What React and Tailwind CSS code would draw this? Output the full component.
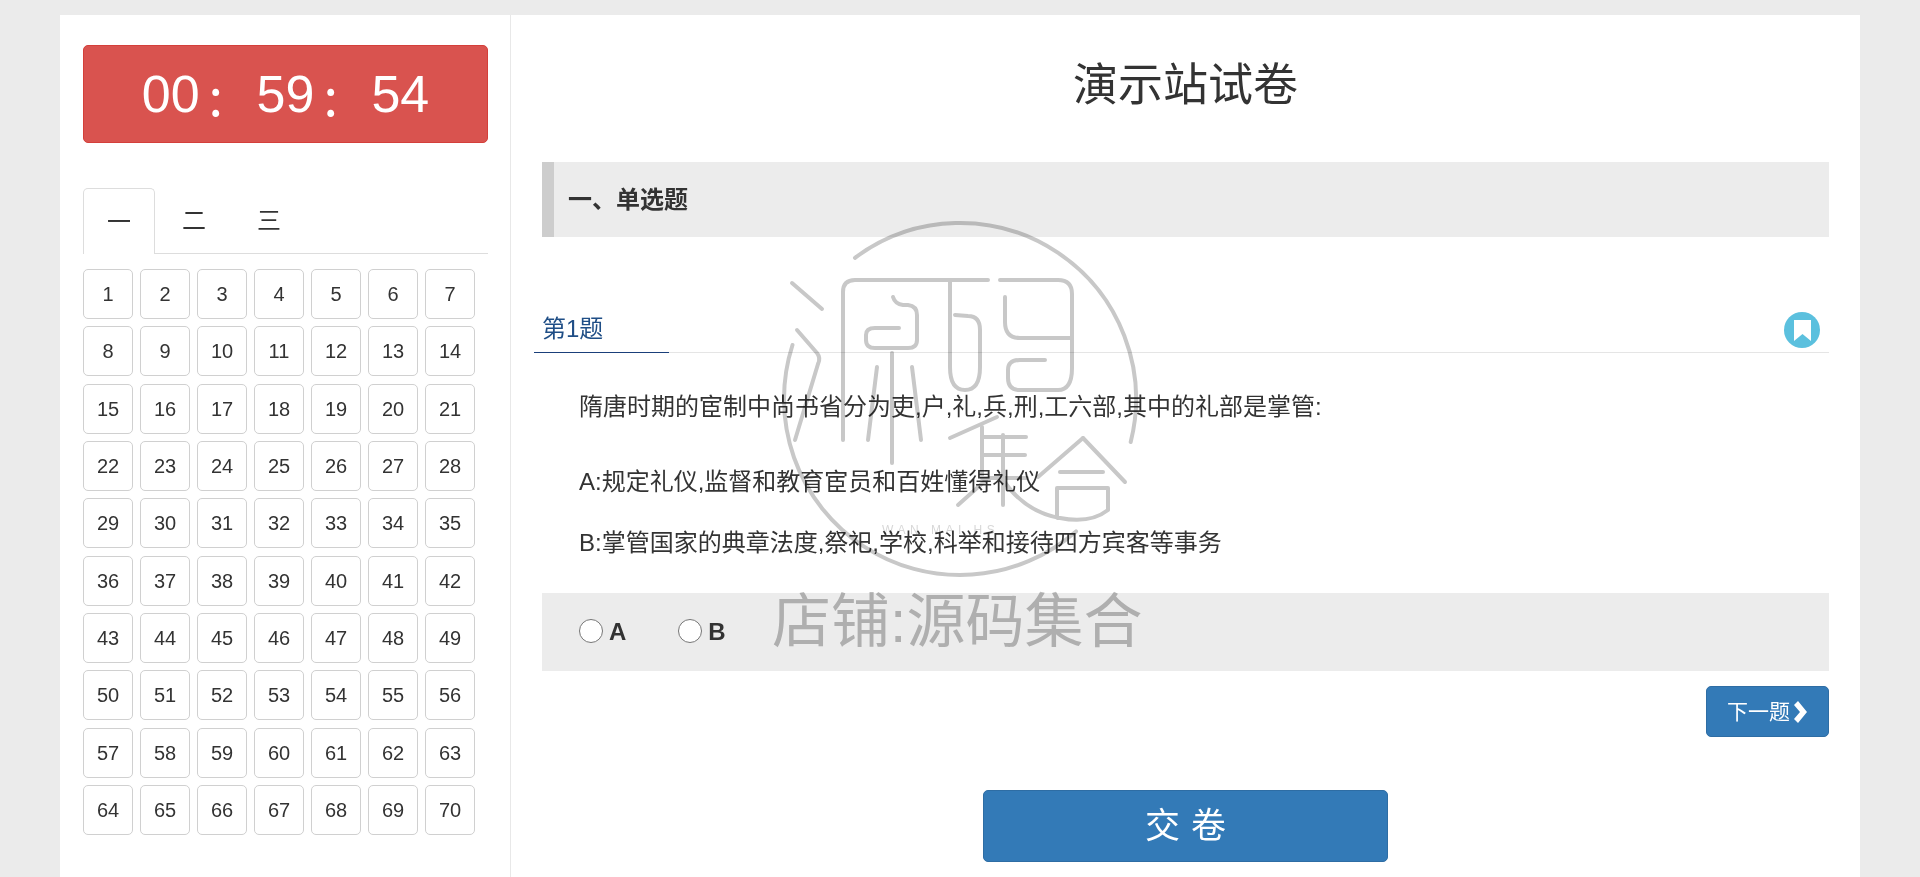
import React from 'react';

const numbers = Array.from({ length: 70 }, (_, i) => i + 1);

// 水印印章：圆环 + 线条字形，坐标直接用页面坐标
function Watermark() {
    return (
        <svg
            className="absolute left-[760px] top-[210px] w-[400px] h-[380px] mix-blend-multiply pointer-events-none"
            viewBox="760 210 400 380"
            fill="none"
            stroke="#c8c8c8"
            strokeWidth="4"
            strokeLinecap="round"
            strokeLinejoin="round"
        >
            <path d="M855 257.8A176 176 0 0 1 1130.7 442" />
            <path d="M1076 531.4A176 176 0 0 1 792.5 345" />
            <path d="M792 283L822 309" />
            <path d="M797 330L817 353Q821 358 818 364L795 440" />
            <path d="M843 440V292Q843 280 855 280H988" />
            <path d="M893 297Q895 304 903 305H908Q917 306 917 315V340Q917 348 908 348H875Q866 348 866 340V335Q866 328 875 328H899" />
            <path d="M877 367L868 440" />
            <path d="M912 367L921 440" />
            <path d="M892 353V463" />
            <path d="M950 282V367Q950 390 965 390Q980 390 980 367V330Q980 316 968 316L955 315" />
            <path d="M1000 280H1058Q1072 280 1072 294V368Q1072 390 1058 390H1020Q1008 390 1008 378V370Q1008 360 1020 360H1045" />
            <path d="M1005 297V322Q1005 338 1020 338H1070" />
            <path d="M997 417L950 438" />
            <path d="M982 427V478" />
            <path d="M982 437H1026" />
            <path d="M982 455H1025" />
            <path d="M982 478H1027" />
            <path d="M1003 435V505" />
            <path d="M986 480L958 505" />
            <path d="M1003 480Q1025 512 1060 518Q1090 524 1108 510V488H1057V518" />
            <path d="M1083 438L1038 477" />
            <path d="M1083 438L1125 482" />
            <path d="M1060 472H1103" />
            <text x="882" y="534" fontSize="12" fill="#d8d8d8" stroke="none" letterSpacing="4.5" fontFamily="'Liberation Sans', sans-serif">WAN MAI HS</text>
        </svg>
    );
}

function TimerColon() {
    return <span className="inline-block w-[57px] pl-[9px] font-['Noto_Sans_CJK_SC',sans-serif]">:</span>;
}

function App() {
    return (
        <div className="relative h-[877px] overflow-hidden bg-[#ebebeb] pt-[15px] font-['Liberation_Sans','Noto_Sans_CJK_SC',sans-serif] text-[#333]">
            <div className="ml-[60px] flex h-[862px] w-[1800px] bg-white">
                {/* 左侧：计时 + 题号 */}
                <div className="w-[451px] shrink-0 border-r border-[#e8e8e8] pl-[23px] pt-[30px]">
                    <div className="flex h-[98px] w-[405px] items-center justify-center rounded-[5px] border border-[#d43f3a] bg-[#d9534f] text-[52px] text-white">
                        <span>00</span><TimerColon /><span>59</span><TimerColon /><span>54</span>
                    </div>
                    <div className="mt-[45px] flex h-[66px] w-[405px] border-b border-[#ddd] text-[24px]">
                        <div className="flex h-[66px] w-[72px] items-center justify-center rounded-t-[5px] border border-b-0 border-[#ddd] bg-white">一</div>
                        <div className="ml-[3px] flex h-[65px] w-[72px] items-center justify-center">二</div>
                        <div className="ml-[3px] flex h-[65px] w-[72px] items-center justify-center">三</div>
                    </div>
                    <div className="mt-[15px] grid w-[392px] grid-cols-[repeat(7,50px)] gap-x-[7px] gap-y-[7.33px]">
                        {numbers.map((n) => (
                            <div key={n} className="flex h-[50px] items-center justify-center rounded-[5px] border border-[#d0d0d0] text-[20px]">
                                {n}
                            </div>
                        ))}
                    </div>
                </div>

                {/* 右侧：试卷 */}
                <div className="min-w-0 flex-1 px-[31px]">
                    <h1 className="mb-[5px] flex h-[142px] items-center justify-center text-[45px] font-normal">演示站试卷</h1>
                    <div className="flex h-[75px] items-center border-l-[12px] border-[#cdcdcd] bg-[#ececec] pl-[14px] text-[24px] font-bold">
                        一、单选题
                    </div>

                    <div className="-ml-[8px] mt-[72px] flex h-[44px] justify-between border-b border-[#e5e5e5]">
                        <div className="-mb-px h-[44px] w-[135px] border-b border-[#1a3f7a] pl-[8px] text-[24px] leading-[40px] text-[#1f4e86]">第1题</div>
                        <div className="mr-[9px] mt-[3px] flex h-[36px] w-[36px] items-center justify-center self-start rounded-full bg-[#5bc0de]">
                            <svg width="17" height="21" viewBox="0 0 17 21" fill="#fff">
                                <path d="M0 0H17V21L8.5 14L0 21Z" />
                            </svg>
                        </div>
                    </div>

                    <p className="ml-[37px] mt-[39px] text-[24px] leading-[30px]">隋唐时期的宦制中尚书省分为吏,户,礼,兵,刑,工六部,其中的礼部是掌管:</p>
                    <p className="ml-[37px] mt-[45px] text-[24px] leading-[30px]">A:规定礼仪,监督和教育宦员和百姓懂得礼仪</p>
                    <p className="ml-[37px] mt-[31px] text-[24px] leading-[30px]">B:掌管国家的典章法度,祭祀,学校,科举和接待四方宾客等事务</p>

                    <div className="mt-[35px] flex h-[78px] items-center bg-[#ececec] pl-[37px] text-[24px] font-bold">
                        <label className="flex items-center">
                            <span className="-mt-[2px] h-[24px] w-[24px] rounded-full border border-[#767676] bg-white" />
                            <span className="ml-[6px]">A</span>
                        </label>
                        <label className="ml-[52px] flex items-center">
                            <span className="-mt-[2px] h-[24px] w-[24px] rounded-full border border-[#767676] bg-white" />
                            <span className="ml-[6px]">B</span>
                        </label>
                    </div>

                    <div className="mt-[15px] flex justify-end">
                        <button className="flex h-[51px] w-[123px] items-center justify-center rounded-[5px] border border-[#2e6da4] bg-[#337ab7] text-[21px] text-white">
                            下一题
                            <svg width="16" height="22" viewBox="0 0 16 22" fill="#fff" className="ml-[2px]">
                                <path d="M6 0L15 11L6 22L2 18L8 11L2 4Z" />
                            </svg>
                        </button>
                    </div>

                    <div className="mt-[53px] flex justify-center">
                        <button className="h-[72px] w-[405px] rounded-[5px] border border-[#2e6da4] bg-[#337ab7] pl-[11px] text-[35px] tracking-[11px] text-white">
                            交卷
                        </button>
                    </div>
                </div>
            </div>

            <Watermark />
            <div className="pointer-events-none absolute left-[772px] top-[582px] whitespace-nowrap text-[59px] leading-[80px] text-[#bdbdbd] mix-blend-multiply">
                店铺:源码集合
            </div>
        </div>
    );
}

export default App;
